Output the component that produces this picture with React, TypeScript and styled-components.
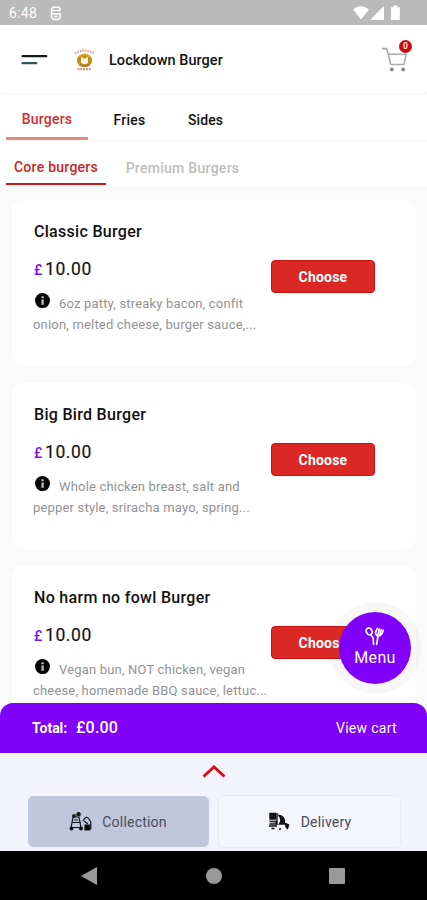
import React from 'react';
import styled, { createGlobalStyle } from 'styled-components';

const GlobalStyle = createGlobalStyle`
  * { box-sizing: border-box; }
  body { margin: 0; background: #fafafa; }
  button { font: inherit; border: 0; padding: 0; margin: 0; }
`;

const Screen = styled.div`
  width: 427px;
  height: 900px;
  display: flex;
  flex-direction: column;
  overflow: hidden;
  background: #fafafa;
  color: #111;
  font-family: Roboto, sans-serif;
  white-space: nowrap;
`;

const StatusBar = styled.div`
  flex: none;
  height: 25px;
  display: flex;
  align-items: center;
  padding: 1px 26px 0 9px;
  background: #bababa;
  color: #fff;
  font-size: 14px;
  line-height: 22px;
`;

const Clock = styled.span`
  width: 41px;
  letter-spacing: 0.25px;
`;

const StatusIcons = styled.div`
  margin-left: auto;
  display: flex;
`;

const Header = styled.header`
  flex: none;
  height: 70px;
  display: flex;
  align-items: center;
  padding: 0 14px 0 21px;
  background: #fff;
  border-bottom: 1px solid #f5f5f5;
  border-radius: 0 0 6px 6px;
`;

const Brand = styled.h1`
  margin: 1px 0 0 14px;
  font-size: 14.5px;
  font-weight: 500;
  letter-spacing: 0.04px;
`;

const Logo = styled.svg`
  margin-left: 26px;
`;

const Cart = styled.button`
  position: relative;
  width: 32px;
  height: 42px;
  margin-left: auto;
  background: none;
`;

const CartIcon = styled.svg`
  display: block;
  margin: 1px 0 0 1px;
`;

const CartBadge = styled.span`
  position: absolute;
  top: 1px;
  right: 1px;
  width: 13px;
  height: 13px;
  border-radius: 50%;
  background: #cf0a0a;
  color: #fff;
  font-size: 8.5px;
  font-weight: 500;
  line-height: 13.5px;
  text-align: center;
`;

const Tabs = styled.nav<{ $sub?: boolean }>`
  flex: none;
  display: flex;
  height: ${(p) => (p.$sub ? 44 : 46)}px;
  padding-left: 6px;
  background: #fff;
  border-bottom: ${(p) => (p.$sub ? '0' : '1px solid #f2f2f2')};
`;

const Tab = styled.a<{ $width: number; $tone: string; $line?: string; $spacing: number; $drop: number }>`
  width: ${(p) => p.$width}px;
  padding-top: ${(p) => p.$drop}px;
  color: ${(p) => p.$tone};
  font-size: 14px;
  font-weight: 500;
  line-height: 18px;
  letter-spacing: ${(p) => p.$spacing}px;
  text-align: center;
  border-bottom: ${(p) => (p.$line ? `solid ${p.$line}` : '0')};
  border-bottom-width: ${(p) => (p.$line === '#e08a8d' ? 3 : 2)}px;
`;

const List = styled.main`
  flex: 1;
  min-height: 0;
  overflow: hidden;
  display: flex;
  flex-direction: column;
  gap: 17px;
  padding: 15px 11px 0 12px;
`;

const Card = styled.article`
  flex: none;
  display: flex;
  height: 166px;
  padding: 22px 41px 0 21px;
  background: #fff;
  border-radius: 11px;
  box-shadow: 0 0 2px rgba(0, 0, 0, 0.025);
`;

const CardInfo = styled.div`
  width: 239px;
`;

const ItemName = styled.h2`
  margin: 0 0 0 1px;
  font-size: 16px;
  font-weight: 500;
  line-height: 20px;
  letter-spacing: 0.3px;
`;

const Price = styled.div`
  margin-top: 15px;
  color: #151515;
  font-size: 17.5px;
  line-height: 24px;
  font-weight: 400;
  letter-spacing: 0.6px;
  -webkit-text-stroke: 0.2px #151515;
`;

const Currency = styled.span`
  display: inline-block;
  width: 12px;
  padding-left: 1px;
  color: #7d12f5;
  font-size: 14px;
  font-weight: 500;
  -webkit-text-stroke: 0;
`;

const Description = styled.div`
  margin-top: 11px;
  color: #929296;
  font-size: 13px;
  line-height: 21px;
  letter-spacing: 0.18px;
`;

const Line = styled.div`
  display: flex;
  height: 21px;
`;

const InfoIcon = styled.svg`
  flex: none;
  margin: 0 9px 0 2px;
`;

const Choose = styled.button`
  width: 104px;
  height: 33px;
  margin: 38px 0 0 -1px;
  border: 1px solid #cc1111;
  border-radius: 4px;
  background: #db2824;
  color: #fff;
  font-size: 14px;
  font-weight: 700;
  line-height: 30px;
  letter-spacing: 0.2px;
`;

const CartBar = styled.section`
  position: relative;
  flex: none;
  display: flex;
  align-items: center;
  height: 50px;
  margin-top: -12px;
  padding: 0 30px 0 32px;
  border-radius: 13px 13px 0 0;
  background: #8000fa;
  color: #fff;
  border-bottom: 1px solid #6e0ae0;
`;

const TotalLabel = styled.span`
  width: 44px;
  font-size: 14px;
  font-weight: 700;
`;

const TotalValue = styled.span`
  font-size: 16px;
  font-weight: 500;
  letter-spacing: 0.2px;
`;

const ViewCart = styled.span`
  margin-left: auto;
  font-size: 14px;
  letter-spacing: 0.3px;
`;

const MenuButton = styled.button`
  position: absolute;
  right: 16px;
  bottom: 68px;
  width: 72px;
  height: 72px;
  display: flex;
  flex-direction: column;
  align-items: center;
  padding-top: 15px;
  border-radius: 50%;
  background: #8000fa;
  color: #fff;
  font-size: 16px;
  line-height: 21px;
  letter-spacing: 0.3px;
  box-shadow: 0 0 0 10px rgba(120, 120, 120, 0.06);
`;

const Sheet = styled.section`
  flex: none;
  height: 98px;
  display: flex;
  flex-direction: column;
  align-items: center;
  background: #f2f3fc;
`;

const Chevron = styled.svg`
  flex: none;
  margin: 11px 0 17px;
`;

const Modes = styled.div`
  width: 100%;
  display: grid;
  grid-template-columns: 181px 183px;
  gap: 9px;
  align-items: center;
  padding-left: 28px;
`;

const Mode = styled.button<{ $active?: boolean }>`
  height: ${(p) => (p.$active ? 51 : 53)}px;
  display: flex;
  align-items: center;
  justify-content: center;
  gap: ${(p) => (p.$active ? 10 : 11)}px;
  padding-right: ${(p) => (p.$active ? 1 : 0)}px;
  border: 1px solid ${(p) => (p.$active ? '#c3c9df' : '#e9ebf3')};
  border-radius: 5px;
  background: ${(p) => (p.$active ? '#bfc7dd' : '#f4f5fd')};
  color: #4b4d58;
  font-size: 14px;
  letter-spacing: ${(p) => (p.$active ? 0.2 : 0.2)}px;
`;

const NavBar = styled.footer`
  flex: none;
  height: 49px;
  display: grid;
  grid-template-columns: 17px 16px 16px;
  column-gap: 107.5px;
  align-items: center;
  padding-left: 81px;
  background: #000;
`;

interface Item {
  name: string;
  lines: [string, string];
}

const items: Item[] = [
  { name: 'Classic Burger', lines: ['6oz patty, streaky bacon, confit', 'onion, melted cheese, burger sauce,...'] },
  { name: 'Big Bird Burger', lines: ['Whole chicken breast, salt and', 'pepper style, sriracha mayo, spring...'] },
  { name: 'No harm no fowl Burger', lines: ['Vegan bun, NOT chicken, vegan', 'cheese, homemade BBQ sauce, lettuc...'] },
];

function BurgerCard({ item }: { item: Item }) {
  return (
    <Card>
      <CardInfo>
        <ItemName>{item.name}</ItemName>
        <Price><Currency>£</Currency>10.00</Price>
        <Description>
          <Line>
            <InfoIcon width="15" height="16" viewBox="0 0 15 16">
              <circle cx="7.5" cy="7.6" r="7.5" fill="#050505" />
              <path d="M7.6 3.2V5.2M7.6 6.4V11.6" fill="none" stroke="#c4c4c4" strokeWidth="2.2" />
              <path d="M5.9 11.2H9.3" stroke="#8c8c8c" strokeWidth="1" />
            </InfoIcon>
            {item.lines[0]}
          </Line>
          <Line>{item.lines[1]}</Line>
        </Description>
      </CardInfo>
      <Choose>Choose</Choose>
    </Card>
  );
}

export default function App() {
  return (
    <Screen>
      <GlobalStyle />
      <StatusBar>
        <Clock>6:48</Clock>
        <svg width="12" height="15" viewBox="0 0 12 15" fill="none" stroke="#fff" strokeWidth="1.5">
          <path d="M10 5V2.2L8.8 1.2H3.2L1.5 2.8V11.2L3.5 13.4H8.3L10.2 11.5V7.8H1.5M1.5 4.6H10M4 10.4H7.5" />
        </svg>
        <StatusIcons>
          <svg width="48" height="16" viewBox="0 0 48 16" fill="#fff">
            <path d="M0 4.5Q8 -2 16 4.5L8 14.5Z" />
            <path d="M17 15L31 1V15Z" />
            <path d="M38 2.2H40.3V.5H44.3V2.2H46.8V15H38Z" />
          </svg>
        </StatusIcons>
      </StatusBar>
      <Header>
        <svg width="27" height="14" viewBox="0 0 27 14" fill="none" strokeLinecap="round">
          <path d="M1.5 3.2H25.3" stroke="#15191c" strokeWidth="2.2" />
          <path d="M1.5 10.2H15.3" stroke="#3d515c" strokeWidth="2.2" />
        </svg>
        <Logo width="21" height="24" viewBox="0 0 21 24" fill="none">
          <path d="M1 5.5Q10.5 -.5 20 5.5" stroke="#d3a9ae" strokeWidth="2.2" strokeDasharray="1.7 .9" />
          <ellipse cx="10.5" cy="12.5" rx="7.6" ry="6.8" fill="#c48b21" />
          <path d="M4.5 9Q10.5 3.5 16.5 9" stroke="#dda92e" strokeWidth="1.6" />
          <path d="M7 9.5L8.3 8.8L9.3 10.4H11.7L12.7 8.8L14 9.5V14.5L12.4 16H8.6L7 14.5Z" fill="#fff5dc" />
          <path d="M6 16.6Q10.5 19.2 15 16.6" stroke="#a8702a" strokeWidth="1.2" />
          <path d="M3.5 21.2H17.5" stroke="#c9998c" strokeWidth="2.2" strokeDasharray="2 .8" />
        </Logo>
        <Brand>Lockdown Burger</Brand>
        <Cart aria-label="Cart">
          <CartIcon width="28" height="26" viewBox="0 0 28 26" fill="none" stroke="#aaa" strokeWidth="1.6">
            <path d="M0 1.6H4.6L6.3 7.2L8.5 16.5Q8.8 17.5 10 17.5H22L24.2 7.2M6.3 7.2H24.2" />
            <circle cx="9.8" cy="22.5" r="1.9" fill="#888" stroke="none" />
            <circle cx="21.2" cy="22.5" r="1.9" fill="#888" stroke="none" />
          </CartIcon>
          <CartBadge>0</CartBadge>
        </Cart>
      </Header>
      <Tabs>
        <Tab $width={82} $tone="#cf2c2e" $line="#e08a8d" $spacing={0.22} $drop={15}>Burgers</Tab>
        <Tab $width={83} $tone="#111" $spacing={0.2} $drop={16}>Fries</Tab>
        <Tab $width={69} $tone="#111" $spacing={0.1} $drop={16}>Sides</Tab>
      </Tabs>
      <Tabs $sub>
        <Tab $width={100} $tone="#cf1d22" $line="#c91c22" $spacing={0.26} $drop={17}>Core burgers</Tab>
        <Tab $width={153} $tone="#bdbdbd" $spacing={0.28} $drop={18}>Premium Burgers</Tab>
      </Tabs>
      <List>
        {items.map((item) => <BurgerCard key={item.name} item={item} />)}
      </List>
      <CartBar>
        <TotalLabel>Total:</TotalLabel>
        <TotalValue>£0.00</TotalValue>
        <ViewCart>View cart</ViewCart>
        <MenuButton>
          <svg width="20" height="20" viewBox="0 0 20 20" fill="none" stroke="#fff" strokeWidth="1.7" strokeLinecap="round">
            <ellipse cx="4.2" cy="4.4" rx="2.8" ry="3.5" transform="rotate(-25 4.2 4.4)" />
            <path d="M6 8L8.2 11L8.5 17.3M13 9L11.6 17.3" />
            <path d="M12.4 1.4L10.6 5Q10.3 8.4 13 8.8Q16 8.9 17 6.5L18.3 3.2M14.2 2L13.2 7M16.2 2.6L15 7" />
          </svg>
          Menu
        </MenuButton>
      </CartBar>
      <Sheet>
        <Chevron width="24" height="14" viewBox="0 0 24 14" fill="none" stroke="#d40b12" strokeWidth="2.9">
          <path d="M1.5 12.5L12 3L22.5 12.5" />
        </Chevron>
        <Modes>
          <Mode $active>
            <svg width="23" height="19" viewBox="0 0 23 19" fill="none" stroke="#15171e" strokeWidth="1.2">
              <path d="M3.5 5H10.5M3 10.5H12M1 15.5H13M4 5L2 16M10 5L12 16M5 8H9" />
              <circle cx="5" cy="4" r="1.3" fill="#15171e" />
              <circle cx="9.5" cy="2.3" r="1.7" fill="#15171e" />
              <path d="M14 9L16 6Q18 4.5 20 7L21.8 10V17M15 9L19 12" />
              <path d="M16 13H21V18H16Z" fill="#050505" />
              <circle cx="2.5" cy="16.5" r="1.4" fill="#050505" />
              <circle cx="12" cy="16.5" r="1.4" fill="#050505" />
            </svg>
            Collection
          </Mode>
          <Mode>
            <svg width="22" height="19" viewBox="0 0 22 19" fill="none" stroke="#111" strokeWidth="1.4">
              <path d="M2 1.5H7.5V7H2Z" fill="#15171e" />
              <path d="M1.5 9.5H8V12H1.5M1 14H9M9 1V13M3.5 16.5H6.5M11 17H13" />
              <path d="M11 3.5Q15.5 4 16.5 8.5L16 12H11.5Q14.5 8 11 3.5Z" fill="#111" />
              <path d="M16 11L20.5 13L19.5 16.5L17.5 14.5" fill="#111" />
            </svg>
            Delivery
          </Mode>
        </Modes>
      </Sheet>
      <NavBar>
        <svg width="16" height="18" viewBox="0 0 16 18"><path d="M0 9L16 0V18Z" fill="#999" /></svg>
        <svg width="16" height="16" viewBox="0 0 16 16"><circle cx="8" cy="8" r="8" fill="#999" /></svg>
        <svg width="16" height="16" viewBox="0 0 16 16"><rect width="16" height="16" rx="1" fill="#999" /></svg>
      </NavBar>
    </Screen>
  );
}
